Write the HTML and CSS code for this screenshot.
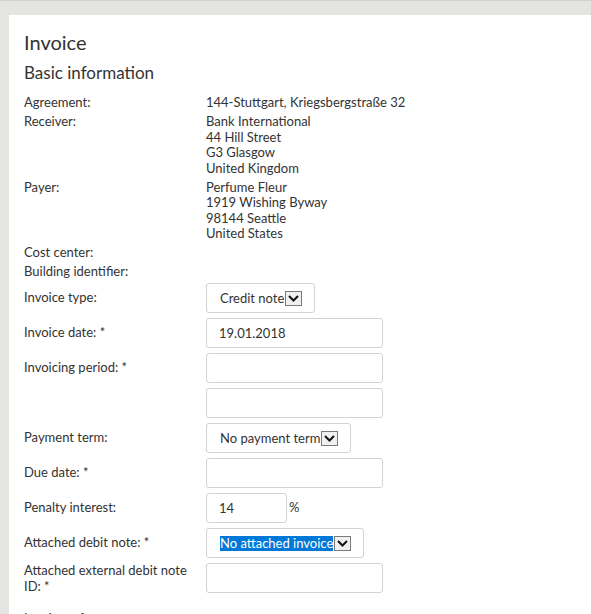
FILE: index.html
```html
<!DOCTYPE html>
<html lang="en">
<head>
  <meta charset="UTF-8" />
  <title>Invoice</title>
  <link rel="stylesheet" href="styles.css">
</head>
<body>

  <div class="page">
    <div class="panel">

      <h1>Invoice</h1>
      <h2>Basic information</h2>

      <!-- Read-only info -->
      <div class="row">
        <div class="label">Agreement:</div>
        <div class="value">144-Stuttgart, Kriegsbergstraße 32</div>
      </div>
      <div class="row">
        <div class="label">Receiver:</div>
        <div class="value">Bank International<br>44 Hill Street<br>G3 Glasgow<br>United Kingdom</div>
      </div>
      <div class="row">
        <div class="label">Payer:</div>
        <div class="value">Perfume Fleur<br>1919 Wishing Byway<br>98144 Seattle<br>United States</div>
      </div>
      <div class="row">
        <div class="label">Cost center:</div>
        <div class="value"></div>
      </div>
      <div class="row">
        <div class="label">Building identifier:</div>
        <div class="value"></div>
      </div>

      <!-- Editable fields -->
      <div class="row form-row">
        <div class="label">Invoice type:</div>
        <div class="value">
          <div class="select">
            <span class="select-text">Credit note</span>
            <span class="arrow"><svg width="11" height="7" viewBox="0 0 11 7"><path d="M1 1l4.5 4.5L10 1" fill="none" stroke="#111" stroke-width="2"/></svg></span>
          </div>
        </div>
      </div>
      <div class="row form-row">
        <div class="label">Invoice date: *</div>
        <div class="value"><input class="field" type="text" value="19.01.2018"></div>
      </div>
      <div class="row form-row">
        <div class="label">Invoicing period: *</div>
        <div class="value stack">
          <input class="field" type="text">
          <input class="field" type="text">
        </div>
      </div>
      <div class="row form-row">
        <div class="label">Payment term:</div>
        <div class="value">
          <div class="select">
            <span class="select-text">No payment term</span>
            <span class="arrow"><svg width="11" height="7" viewBox="0 0 11 7"><path d="M1 1l4.5 4.5L10 1" fill="none" stroke="#111" stroke-width="2"/></svg></span>
          </div>
        </div>
      </div>
      <div class="row form-row">
        <div class="label">Due date: *</div>
        <div class="value"><input class="field" type="text"></div>
      </div>
      <div class="row form-row">
        <div class="label">Penalty interest:</div>
        <div class="value inline">
          <input class="field short" type="text" value="14">
          <span class="unit">%</span>
        </div>
      </div>
      <div class="row form-row">
        <div class="label">Attached debit note: *</div>
        <div class="value">
          <div class="select">
            <span class="select-text selected">No attached invoice</span>
            <span class="arrow"><svg width="11" height="7" viewBox="0 0 11 7"><path d="M1 1l4.5 4.5L10 1" fill="none" stroke="#111" stroke-width="2"/></svg></span>
          </div>
        </div>
      </div>
      <div class="row form-row">
        <div class="label">Attached external debit note ID: *</div>
        <div class="value"><input class="field" type="text"></div>
      </div>
      <div class="row form-row next">
        <div class="label">Invoice reference:</div>
        <div class="value"></div>
      </div>

    </div>
  </div>

</body>
</html>
```

FILE: styles.css
```css
body {
  margin: 0;
  background: #e4e4e0;
  border-top: 1px solid #d2d2cd;
  font-family: Lato, "Open Sans", sans-serif;
  font-size: 13px;
  color: #333;
}

.page {
  padding: 14px 0 0 9px;
}

.panel {
  background: #fff;
  padding: 14px 0 20px 15px;
  min-height: 700px;
}

h1 {
  font-size: 20px;
  font-weight: normal;
  margin: 1px 0 8px;
  line-height: 24px;
}
h2 {
  font-size: 17px;
  font-weight: normal;
  margin: 0 0 11px;
  line-height: 22px;
}

/* Rows */
.row {
  display: flex;
  line-height: 15.5px;
  margin-bottom: 3.5px;
}
.label {
  width: 182px;
  flex-shrink: 0;
  padding-right: 10px;
  box-sizing: border-box;
}
.value {
  flex: 1;
}

.form-row {
  margin-bottom: 5px;
}
.form-row .label {
  align-self: flex-start;
  min-height: 30px;
  display: flex;
  align-items: center;
}
.row:not(.form-row) + .form-row {
  margin-top: 2px;
}
.form-row.next {
  margin-top: 10px;
}

/* Inputs */
.field {
  display: block;
  width: 177px;
  height: 30px;
  box-sizing: border-box;
  border: 1px solid #d3d3d3;
  border-radius: 3px;
  padding: 0 12px;
  font-family: inherit;
  font-size: 13px;
  color: #333;
  background: #fff;
  margin: 0;
}
.field.short {
  width: 81px;
}
.stack {
  display: flex;
  flex-direction: column;
  gap: 5px;
}
.inline {
  display: flex;
  align-items: center;
}
.unit {
  margin-left: 2px;
}

/* Selects */
.select {
  display: inline-flex;
  align-items: center;
  height: 30px;
  box-sizing: border-box;
  border: 1px solid #d3d3d3;
  border-radius: 3px;
  padding: 0 12px 0 13px;
  vertical-align: top;
}
.select-text {
  line-height: 15px;
}
.select-text.selected {
  background: #0078d7;
  color: #fff;
}
.arrow {
  width: 15px;
  height: 13px;
  border: 1px solid #7a7a7a;
  background: #f0f0f0;
  margin-left: 1px;
  display: flex;
  align-items: center;
  justify-content: center;
}
```
